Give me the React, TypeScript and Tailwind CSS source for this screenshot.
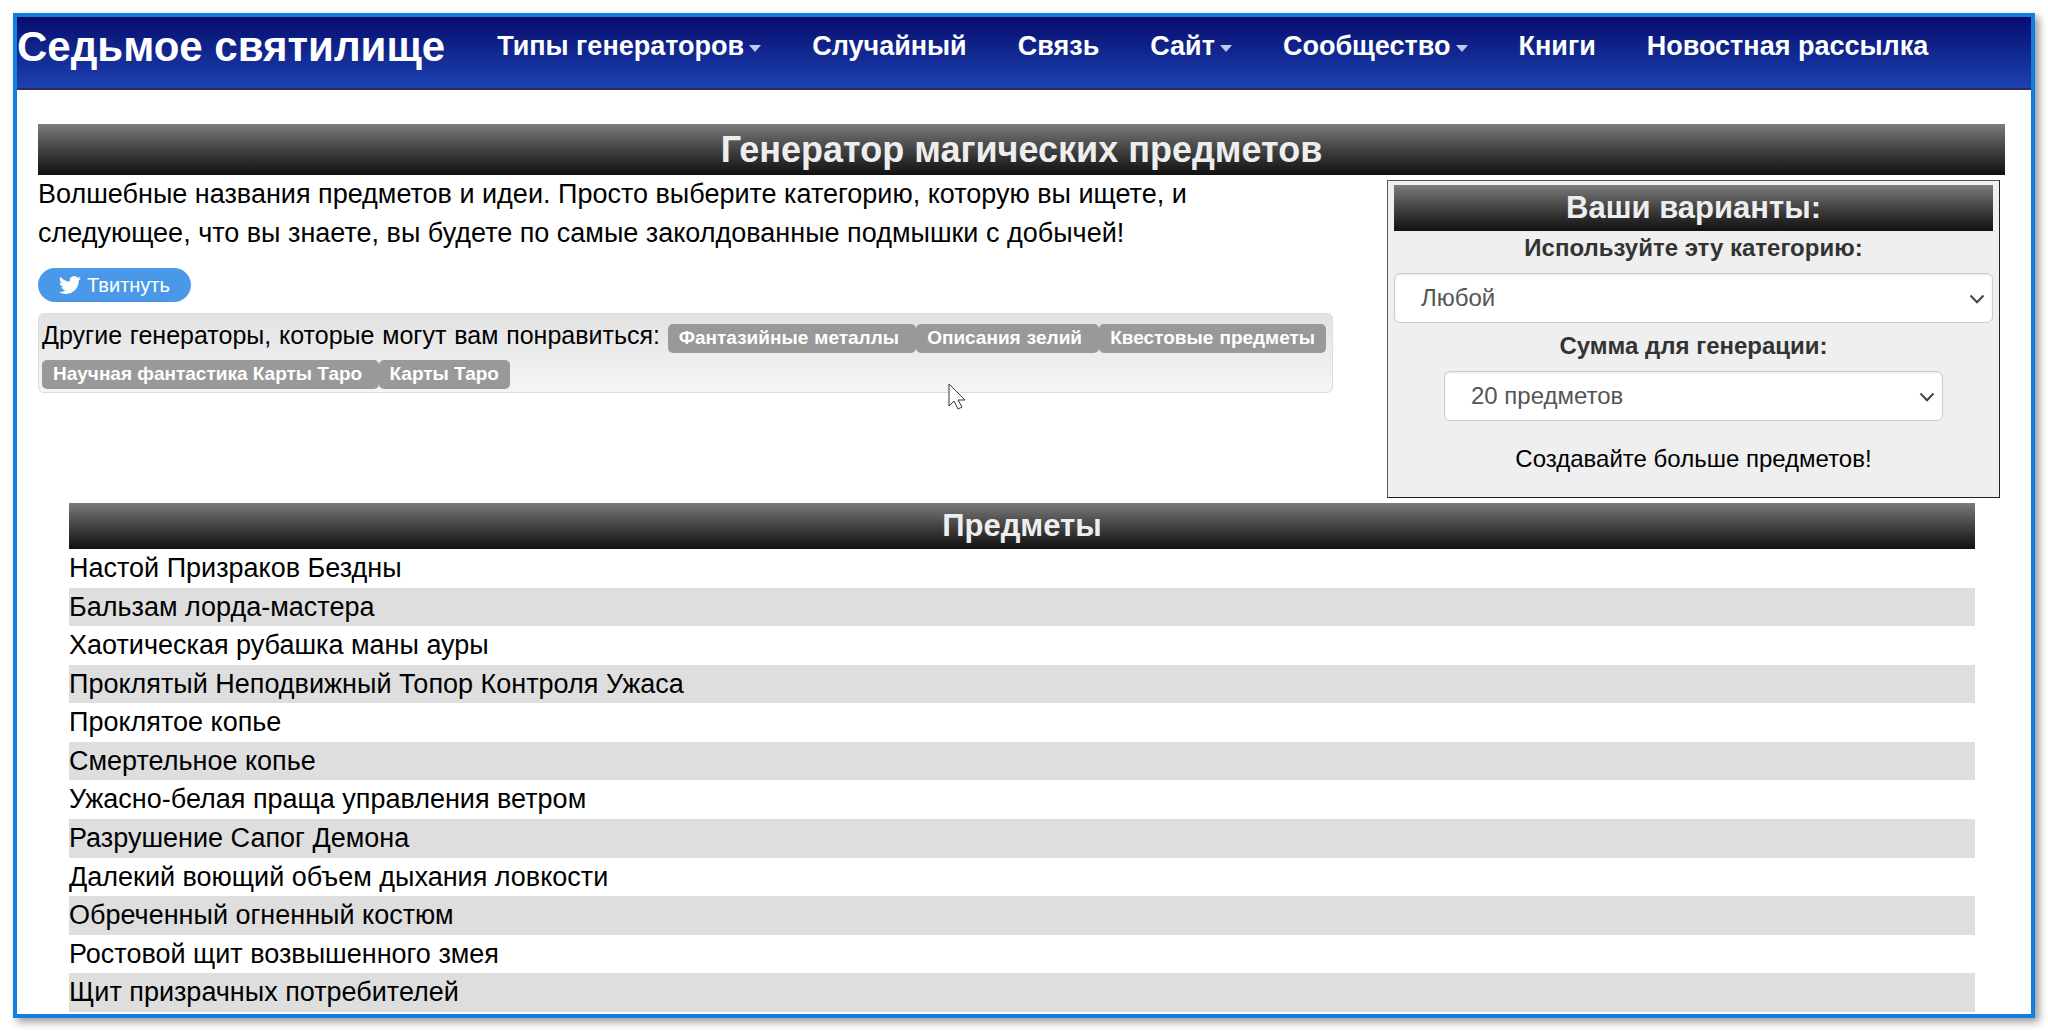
import { useState } from "react";

const menu = [
  { name: "Типы генераторов", dropdown: true },
  { name: "Случайный", dropdown: false },
  { name: "Связь", dropdown: false },
  { name: "Сайт", dropdown: true },
  { name: "Сообщество", dropdown: true },
  { name: "Книги", dropdown: false },
  { name: "Новостная рассылка", dropdown: false },
];

const otherGenerators = [
  "Фантазийные металлы ",
  "Описания зелий ",
  "Квестовые предметы ",
  "Научная фантастика Карты Таро ",
  "Карты Таро",
];

const items = [
  "Настой Призраков Бездны",
  "Бальзам лорда-мастера",
  "Хаотическая рубашка маны ауры",
  "Проклятый Неподвижный Топор Контроля Ужаса",
  "Проклятое копье",
  "Смертельное копье",
  "Ужасно-белая праща управления ветром",
  "Разрушение Сапог Демона",
  "Далекий воющий объем дыхания ловкости",
  "Обреченный огненный костюм",
  "Ростовой щит возвышенного змея",
  "Щит призрачных потребителей",
];

const categories = ["Любой", "Оружие", "Броня", "Зелья"];
const amounts = ["20 предметов", "10 предметов", "5 предметов"];

interface ISelectField {
  id: string;
  label: string;
  options: Array<string>;
  value: string;
  onChange: (value: string) => void;
}

const SelectField = ({ id, label, options, value, onChange }: ISelectField) => {
  return (
    <>
      <label
        htmlFor={id}
        className="block text-center text-[24px] leading-[34px] font-bold text-[#333]"
      >
        {label}
      </label>
      <div className="relative mt-2">
        <select
          id={id}
          value={value}
          onChange={(e) => onChange(e.target.value)}
          className="w-full h-[50px] appearance-none rounded-md border border-[#ccc] bg-white pl-[26px] pr-10 text-[24px] text-[#555] shadow-[inset_0_1px_2px_rgba(0,0,0,0.1)]"
        >
          {options.map((option) => (
            <option key={option}>{option}</option>
          ))}
        </select>
        <svg
          viewBox="0 0 16 10"
          className="pointer-events-none absolute right-2 top-[21px] h-[10px] w-4"
          fill="none"
          stroke="#444"
          strokeWidth="2"
        >
          <path d="M1.5 1.5 8 8.2l6.5-6.7" />
        </svg>
      </div>
    </>
  );
};

const App = () => {
  const [category, setCategory] = useState<string>(categories[0]);
  const [amount, setAmount] = useState<string>(amounts[0]);

  return (
    <div className="flex min-h-screen bg-white p-[13px] font-['Liberation_Sans',Arial,sans-serif] text-black">
      <div className="relative flex flex-1 flex-col border-4 border-[#147be0] shadow-[4px_4px_8px_rgba(0,0,0,0.4)]">
        <nav className="flex h-[73px] border-b-2 border-[#2a2d55] bg-linear-to-b from-[#080a6e] to-[#1f41b2] font-bold whitespace-nowrap text-white">
          <a href="#" className="text-[42px] leading-[60px]">
            Седьмое святилище
          </a>
          <ul className="ml-[52px] flex gap-[51px] text-[27px] leading-[59px]">
            {menu.map((link) => (
              <li key={link.name}>
                <a href="#" className="flex items-center">
                  {link.name}
                  {link.dropdown && (
                    <span className="mt-1 ml-[5px] border-x-6 border-t-7 border-x-transparent border-t-[#c3c8ea]" />
                  )}
                </a>
              </li>
            ))}
          </ul>
        </nav>

        <main className="flex flex-1 flex-col pt-[34px] pr-[26px] pl-[21px]">
          <h1 className="bg-linear-to-b from-[#7c7c7c] to-[#111] text-center text-[36px] leading-[51px] font-bold text-[#eee]">
            Генератор магических предметов
          </h1>

          <div className="grid grid-cols-[minmax(0,1295fr)_minmax(0,613fr)] gap-[54px] pr-[5px]">
            <div>
              <p className="max-w-[1200px] text-[27px] leading-[39px]">
                Волшебные названия предметов и идеи. Просто выберите категорию,
                которую вы ищете, и следующее, что вы знаете, вы будете по самые
                заколдованные подмышки с добычей!
              </p>
              <button
                type="button"
                className="mt-[15px] flex h-[34px] items-center gap-[6px] rounded-full bg-[#4a99e9] px-[21px] text-[20px] text-white"
              >
                <svg viewBox="0 0 24 24" className="size-[22px]" fill="white">
                  <path d="M23.95 4.57a10 10 0 0 1-2.82.77 4.96 4.96 0 0 0 2.16-2.72c-.95.55-2 .95-3.13 1.18a4.92 4.92 0 0 0-8.38 4.48C7.69 8.1 4.07 6.13 1.64 3.16a4.93 4.93 0 0 0 1.52 6.57 4.9 4.9 0 0 1-2.23-.61v.06a4.92 4.92 0 0 0 3.95 4.83 5 5 0 0 1-2.21.08 4.94 4.94 0 0 0 4.6 3.42A9.87 9.87 0 0 1 0 19.54a13.99 13.99 0 0 0 7.55 2.21c9.05 0 14-7.5 14-13.98 0-.21 0-.42-.02-.63a9.94 9.94 0 0 0 2.42-2.57z" />
                </svg>
                Твитнуть
              </button>
              <p className="mt-[11px] rounded-md border border-[#dcdcdc] bg-linear-to-b from-[#e2e2e2] to-[#f5f5f5] py-[3px] pr-[6px] pl-[3px] text-justify text-[25px] leading-[36px]">
                Другие генераторы, которые могут вам понравиться:{" "}
                {otherGenerators.map((name) => (
                  <a
                    key={name}
                    href="#"
                    className="rounded-[5px] bg-[#999] px-[11px] pt-[3px] pb-[5px] text-[19px] leading-none font-bold text-white"
                  >
                    {name}
                  </a>
                ))}
              </p>
            </div>

            <form
              className="mt-[5px] border border-t-[#555] border-r-[#222] border-b-[#222] border-l-[#555] bg-[#efefef] px-[6px] pt-1"
              onSubmit={(e) => e.preventDefault()}
            >
              <h2 className="bg-linear-to-b from-[#7c7c7c] to-[#111] text-center text-[31px] leading-[46px] font-bold text-[#eee]">
                Ваши варианты:
              </h2>
              <SelectField
                id="category"
                label="Используйте эту категорию:"
                options={categories}
                value={category}
                onChange={setCategory}
              />
              <div className="mx-auto mt-[6px] w-5/6">
                <SelectField
                  id="amount"
                  label="Сумма для генерации:"
                  options={amounts}
                  value={amount}
                  onChange={setAmount}
                />
              </div>
              <button
                type="submit"
                className="mx-auto mt-[21px] mb-[21px] block text-[24px] leading-[34px]"
              >
                Создавайте больше предметов!
              </button>
            </form>
          </div>

          <section className="mt-[5px] mr-[30px] ml-[31px] flex flex-1 flex-col">
            <h2 className="bg-linear-to-b from-[#7c7c7c] to-[#111] text-center text-[31px] leading-[46px] font-bold text-[#eee]">
              Предметы
            </h2>
            <ul className="mb-[2px] grid flex-1 auto-rows-fr text-[27px] leading-[38px]">
              {items.map((item) => (
                <li key={item} className="even:bg-[#dedede]">
                  {item}
                </li>
              ))}
            </ul>
          </section>
        </main>

        <svg
          viewBox="0 0 18 28"
          className="pointer-events-none absolute top-[366px] left-[931px] h-7 w-[18px]"
          fill="white"
          stroke="#333"
        >
          <path d="M1 1v22l5-5 4 8 4-2-4-7h7z" />
        </svg>
      </div>
    </div>
  );
};

export default App;
